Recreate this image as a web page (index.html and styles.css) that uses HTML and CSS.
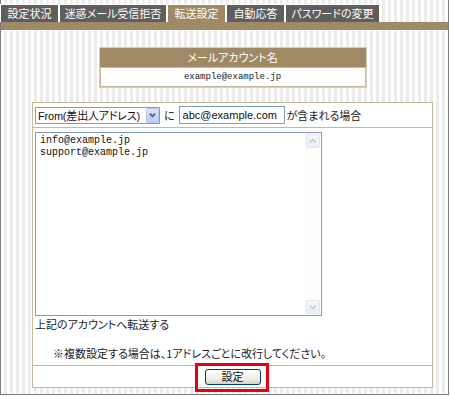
FILE: index.html
```html
<!DOCTYPE html>
<html lang="ja">

<head>
    <meta charset="UTF-8">
    <meta name="viewport" content="width=device-width, initial-scale=1.0">
    <title>転送設定</title>
    <link rel="stylesheet" href="styles.css">
</head>

<body>
    <div class="page">
        <ul class="tabs">
            <li class="tab t1">設定状況</li>
            <li class="tab t2">迷惑メール受信拒否</li>
            <li class="tab t3 active">転送設定</li>
            <li class="tab t4">自動応答</li>
            <li class="tab t5">パスワードの変更</li>
        </ul>
        <div class="bar"></div>
        <div class="main">
            <div class="account">
                <div class="account-head">メールアカウント名</div>
                <div class="account-body">example@example.jp</div>
            </div>
            <div class="form-box">
                <div class="row cond">
                    <div class="select">
                        <select>
                            <option>From(差出人アドレス)</option>
                        </select>
                        <span class="select-btn">
                            <svg width="12" height="14" viewBox="0 0 12 14">
                                <path d="M3 5.5 L6 8.5 L9 5.5" fill="none" stroke="#4d6185" stroke-width="2" />
                            </svg>
                        </span>
                    </div>
                    <span class="ni">に</span>
                    <input class="text" type="text" value="abc@example.com">
                    <span>が含まれる場合</span>
                </div>
                <div class="row list">
                    <div class="area">
                        <textarea>info@example.jp
support@example.jp</textarea>
                        <div class="scroll">
                            <span class="arrow">
                                <svg width="14" height="14" viewBox="0 0 14 14">
                                    <path d="M4 8.5 L7 5.5 L10 8.5" fill="none" stroke="#c4c8d0" stroke-width="1.5" />
                                </svg>
                            </span>
                            <span class="arrow">
                                <svg width="14" height="14" viewBox="0 0 14 14">
                                    <path d="M4 5.5 L7 8.5 L10 5.5" fill="none" stroke="#c4c8d0" stroke-width="1.5" />
                                </svg>
                            </span>
                        </div>
                    </div>
                    <p class="caption">上記のアカウントへ転送する</p>
                    <p class="note">※複数設定する場合は、1アドレスごとに改行してください。</p>
                </div>
                <div class="row submit">
                    <span class="btn-wrap"><button class="btn" type="button">設定</button></span>
                </div>
            </div>
        </div>
    </div>
</body>

</html>
```

FILE: styles.css
```css
* {
    padding: 0;
    margin: 0;
    box-sizing: border-box;
}

body {
    font-family: "Noto Sans CJK JP", sans-serif;
    font-size: 11px;
    color: #222;
    font-feature-settings: "palt";
}

.page {
    width: 449px;
    height: 395px;
    border: 1px solid #7c7c7c;
    border-top: none;
    background: repeating-linear-gradient(90deg, #fff 0 3px, #ececec 3px 6px);
}

/* tabs */
.tabs {
    list-style: none;
    display: flex;
    padding-top: 4px;
    margin-left: -1px;
}

.tab {
    height: 18px;
    line-height: 17px;
    border: 1px solid #fff;
    border-bottom: none;
    background-color: #5e5e5e;
    color: #fff;
    text-align: center;
    font-size: 11px;
}

.t1 { width: 59px; }
.t2 { width: 108px; }
.t3 { width: 59px; }
.t4 { width: 59px; }
.t5 { width: 95px; }

.tab.active {
    background-color: #a08a65;
}

.bar {
    height: 9px;
    background-color: #a08a65;
    border-bottom: 1px solid #fff;
}

.main {
    padding: 16px 15px 0 31px;
}

/* account name */
.account {
    width: 268px;
    margin: 0 auto 14px;
    border: 1px solid #d8cfb8;
}

.account-head {
    height: 19px;
    line-height: 19px;
    background-color: #a08a65;
    color: #fff;
    text-align: center;
    font-size: 11px;
}

.account-body {
    height: 20px;
    line-height: 19px;
    background-color: #fff;
    border: 1px solid #c6bb9d;
    text-align: center;
    font-family: "Liberation Mono", monospace;
    font-size: 9px;
}

/* form */
.form-box {
    width: 401px;
    background-color: #fff;
    border: 1px solid #c4b998;
}

.row {
    padding: 0 2px;
}

.cond {
    display: flex;
    align-items: center;
    height: 25px;
    border-bottom: 1px solid #c4b998;
    font-size: 11px;
}

.select {
    position: relative;
    width: 125px;
    height: 17px;
}

.select select {
    appearance: none;
    width: 100%;
    height: 100%;
    border: 1px solid #7f9db9;
    background-color: #fff;
    font-family: "Liberation Sans", "Noto Sans CJK JP", sans-serif;
    font-size: 11px;
    font-feature-settings: "palt";
    letter-spacing: -0.2px;
    color: #111;
    padding-left: 2px;
    outline: none;
}

.select-btn {
    position: absolute;
    right: 1px;
    top: 1px;
    width: 13px;
    height: 15px;
    display: flex;
    align-items: center;
    justify-content: center;
    border: 1px solid #b4c6f2;
    border-radius: 2px;
    background: linear-gradient(#dbe5fd, #b9cbf8);
}

.ni {
    margin: 0 4px 0 4px;
}

.text {
    width: 106px;
    height: 18px;
    border: 1px solid #7f9db9;
    padding: 0 3px;
    font-family: "Liberation Sans", sans-serif;
    font-size: 11px;
    color: #111;
    margin-right: 2px;
    outline: none;
}

.list {
    padding-top: 4px;
    padding-bottom: 5px;
    border-bottom: 1px solid #c4b998;
}

.area {
    display: flex;
    width: 287px;
    height: 184px;
    border: 1px solid #7f9db9;
}

.area textarea {
    flex: 1;
    border: none;
    resize: none;
    overflow: hidden;
    padding: 2px 4px;
    font-family: "Liberation Mono", monospace;
    font-size: 10px;
    line-height: 12px;
    color: #111;
    outline: none;
}

.scroll {
    width: 16px;
    display: flex;
    flex-direction: column;
    justify-content: space-between;
    padding: 1px;
    background-color: #fdfdfd;
}

.arrow {
    width: 14px;
    height: 14px;
    display: flex;
    border: 1px solid #e2e6ee;
    border-radius: 2px;
    background: linear-gradient(#f6f8fc, #e9edf5);
}

.arrow svg {
    margin: -1px;
}

.caption {
    line-height: 14px;
    margin-top: 1px;
}

.note {
    line-height: 14px;
    margin-top: 15px;
    padding-left: 18px;
}

.submit {
    height: 21px;
    display: flex;
    align-items: center;
    justify-content: center;
}

.btn-wrap {
    position: relative;
    display: flex;
}

.btn-wrap::after {
    content: "";
    position: absolute;
    left: -10px;
    right: -8px;
    top: -6px;
    bottom: -7px;
    border: 3px solid #e60012;
}

.btn {
    width: 56px;
    height: 16px;
    border: 1px solid #003c74;
    border-radius: 3px;
    background: linear-gradient(#fefefe, #f1efe6 60%, #d8d3c4);
    font-family: "Noto Sans CJK JP", sans-serif;
    font-size: 11px;
    line-height: 13px;
    color: #111;
}
```
